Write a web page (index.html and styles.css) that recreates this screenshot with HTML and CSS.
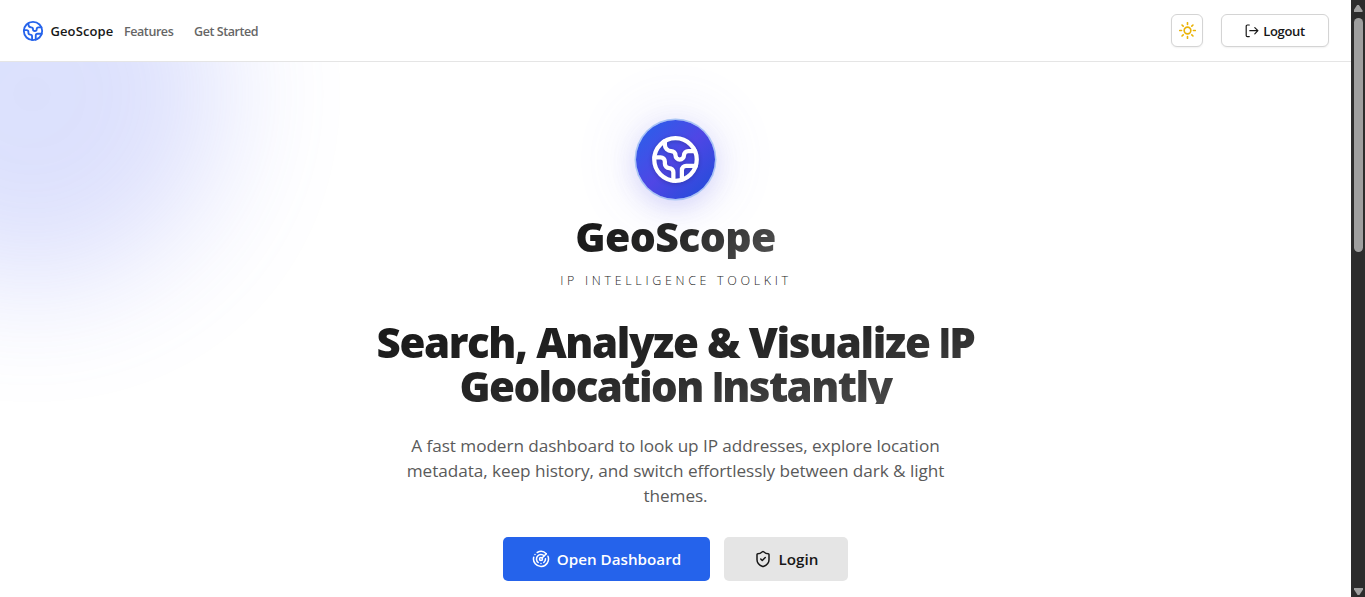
FILE: index.html
```html
<!DOCTYPE html>
<html lang="en">
<head>
<meta charset="utf-8">
<title>GeoScope</title>
<link rel="stylesheet" href="styles.css">
</head>
<body>
<svg class="defs" aria-hidden="true">
  <symbol id="earth" viewBox="0 0 24 24"><path d="M21.54 15H17a2 2 0 0 0-2 2v4.54"/><path d="M7 3.34V5a3 3 0 0 0 3 3a2 2 0 0 1 2 2c0 1.1.9 2 2 2a2 2 0 0 0 2-2c0-1.1.9-2 2-2h3.17"/><path d="M11 21.95V18a2 2 0 0 0-2-2a2 2 0 0 1-2-2v-1a2 2 0 0 0-2-2H2.05"/><circle cx="12" cy="12" r="10"/></symbol>
</svg>
<div class="page">
  <header class="nav">
    <div class="nav-left">
      <svg class="icon brand-icon"><use href="#earth"/></svg>
      <span class="brand">GeoScope</span>
      <a class="link features">Features</a>
      <a class="link started">Get Started</a>
    </div>
    <div class="nav-right">
      <button class="btn-outline theme"><svg class="icon sun" viewBox="0 0 24 24"><circle cx="12" cy="12" r="4.7"/><path d="M12 1v2.6M12 20.4V23M1 12h2.6M20.4 12H23M4.3 4.3l1.6 1.6M18.1 18.1l1.6 1.6M4.3 19.7l1.6-1.6M18.1 5.9l1.6-1.6"/></svg></button>
      <button class="btn-outline logout"><svg class="icon out" viewBox="0 0 14 14"><path d="M4.3 1H2.4A1.2 1.2 0 0 0 1.2 2.2v9.2a1.2 1.2 0 0 0 1.2 1.2h1.9M4.8 6.7h8M9.8 3.6 12.9 6.7 9.8 9.8"/></svg><span>Logout</span></button>
    </div>
  </header>
  <main class="hero">
    <div class="blob"></div>
    <div class="badge"><svg class="icon badge-icon"><use href="#earth"/></svg></div>
    <div class="title grad">GeoScope</div>
    <p class="tag">IP INTELLIGENCE TOOLKIT</p>
    <h1 class="headline grad">Search, Analyze &amp; Visualize <span class="cap">I</span>P<br><span class="second">Geolocation <span class="cap">I</span>nstantly</span></h1>
    <p class="lead">A fast modern dashboard to look up IP addresses, explore location<br>metadata, keep history, and switch effortlessly between dark &amp; light<br>themes.</p>
    <div class="actions">
      <button class="btn primary"><svg class="icon radar" viewBox="0 0 24 24"><path d="M19.07 4.93A10 10 0 0 0 6.99 3.34M4 6h.01M2.29 9.62A10 10 0 1 0 21.31 8.35M16.24 7.76A6 6 0 1 0 8.23 16.67M12 18h.01M17.99 11.66A6 6 0 0 1 15.77 16.67"/><circle cx="12" cy="12" r="2"/><path d="m13.41 10.59 5.66-5.66"/></svg><span>Open Dashboard</span></button>
      <button class="btn secondary"><svg class="icon shield" viewBox="0 0 24 24"><path d="M20 13c0 5-3.5 7.5-7.66 8.95a1 1 0 0 1-.67-.01C7.5 20.5 4 18 4 13V6a1 1 0 0 1 1-1c2 0 4.5-1.2 6.24-2.72a1.17 1.17 0 0 1 1.52 0C14.51 3.81 17 5 19 5a1 1 0 0 1 1 1z"/><path d="m9 12 2 2 4-4"/></svg><span>Login</span></button>
    </div>
  </main>
</div>
<div class="scrollbar"><i class="up"></i><i class="thumb"></i><i class="down"></i></div>
</body>
</html>
```
FILE: styles.css
```css
* { box-sizing: border-box; }
body { margin: 0; height: 597px; overflow: hidden; display: flex; background: #fff; color: #171717; font-family: "Open Sans", "Noto Sans", sans-serif; }
button { font: inherit; color: inherit; padding: 0; display: flex; align-items: center; justify-content: center; }
p, h1 { margin: 0; }
.defs { display: none; }
.icon { fill: none; stroke: currentColor; stroke-width: 2; stroke-linecap: round; stroke-linejoin: round; flex: none; }
.page { width: 1351px; height: 597px; overflow: hidden; }
.nav { height: 62px; padding: 0 22px; border-bottom: 1px solid #e5e5e5; display: flex; justify-content: space-between; align-items: center; }
.nav-left, .nav-right { display: flex; align-items: center; }
.nav-left { font-size: 13px; font-weight: 600; }
.brand-icon { width: 22px; height: 22px; color: #2563eb; }
.brand { margin-left: 6.5px; width: 73.5px; letter-spacing: 0.1px; }
.link { padding-top: 1px; font-size: 12.5px; font-weight: 600; color: #666; letter-spacing: -0.42px; }
.features { width: 70px; }
.nav-right { gap: 18px; }
.btn-outline { height: 33px; border: 1px solid #d4d4d4; border-radius: 6px; background: #fff; box-shadow: 0 1px 2px rgba(0,0,0,.06); }
.theme { width: 32px; }
.sun { width: 17px; height: 17px; color: #eab308; stroke-width: 2.3; }
.logout { width: 108px; gap: 4px; font-size: 13px; font-weight: 600; letter-spacing: -0.3px; }
.out { width: 14px; height: 14px; stroke-width: 1.2; }
.hero { position: relative; height: 535px; overflow: hidden; display: flex; flex-direction: column; align-items: center; text-align: center; }
.blob { position: absolute; left: -160px; top: -160px; width: 384px; height: 384px; border-radius: 50%; background: linear-gradient(135deg, #4f7df8, #6366f1); opacity: .21; filter: blur(64px); }
.badge { position: relative; flex: none; margin: 58px 1px 0 0; width: 79px; height: 79px; border-radius: 50%; display: flex; align-items: center; justify-content: center; color: #fff; background: linear-gradient(135deg, #2563eb, #4f46e5 50%, #1d4ed8); box-shadow: 0 0 0 1.5px #a9c5f5, 0 8px 26px rgba(79,70,229,.18), 0 0 60px 8px rgba(99,102,241,.12); }
.badge-icon { width: 51px; height: 51px; filter: drop-shadow(0 1px 2px rgba(0,0,0,.2)); }
.grad { color: transparent; background-clip: text; -webkit-background-clip: text; }
.title { position: relative; margin-top: 15px; height: 45px; line-height: 45px; font-size: 41px; font-weight: 800; letter-spacing: -0.6px; background-image: linear-gradient(135deg, #171717, #262626 50%, #525252); }
.tag { position: relative; margin-top: 12px; height: 20px; line-height: 20px; font-size: 12.5px; font-weight: 300; letter-spacing: 3.66px; color: #262626; margin-right: -1px; }
.headline { position: relative; margin-top: 29px; width: 672px; height: 84px; font-size: 42px; line-height: 43px; font-weight: 800; letter-spacing: -1.4px; white-space: nowrap; background-image: linear-gradient(170deg, #171717, #262626 50%, #525252); }
.second { letter-spacing: -1.6px; }
.cap { font-family: "Inter", sans-serif; font-size: 41px; line-height: 1; }
.lead { position: relative; margin-top: 29px; font-size: 17.2px; line-height: 25px; font-weight: 400; letter-spacing: -0.07px; color: #5a5a5a; white-space: nowrap; }
.actions { margin-top: 29px; display: flex; gap: 14px; font-size: 15.2px; font-weight: 600; }
.btn { height: 44px; border: 0; border-radius: 5px; gap: 7px; }
.primary { width: 207px; background: #2563eb; color: #fff; }
.secondary { width: 124px; background: #e5e5e5; }
.radar, .shield { width: 18px; height: 18px; }
.scrollbar { width: 14px; height: 597px; background: #2c2c2c; display: flex; flex-direction: column; align-items: center; }
.up, .down { width: 9px; height: 7px; background: #9f9f9f; clip-path: polygon(40% 0, 60% 0, 100% 80%, 100% 100%, 0 100%, 0 80%); }
.up { margin-top: 5px; }
.thumb { width: 9px; height: 234px; margin-top: 6px; border-radius: 5px; background: #9f9f9f; }
.down { margin-top: auto; margin-bottom: 2px; transform: rotate(180deg); }
```
